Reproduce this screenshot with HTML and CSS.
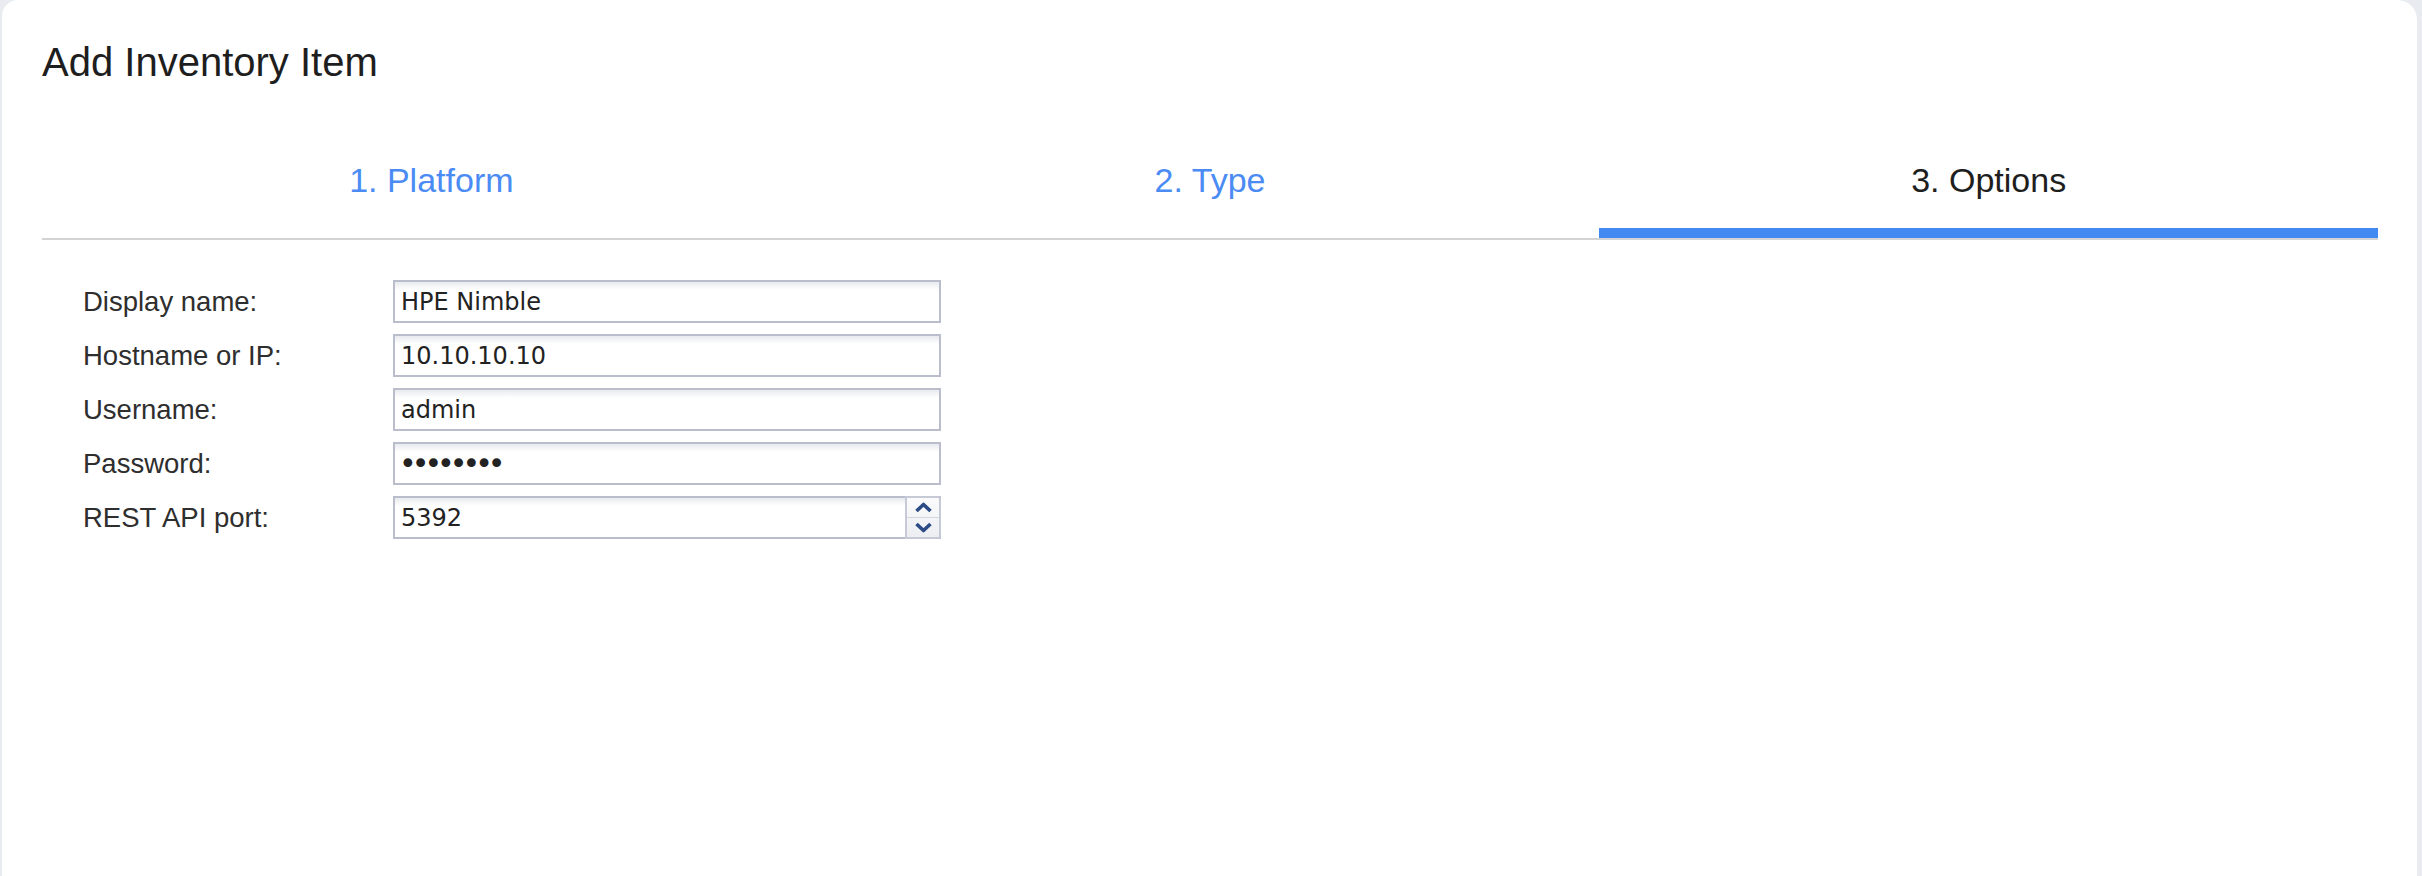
FILE: index.html
```html
<!DOCTYPE html>
<html lang="en">
<head>
    <meta charset="UTF-8">
    <meta name="viewport" content="width=device-width, initial-scale=1.0">
    <title>Add Inventory Item</title>
    <link rel="stylesheet" href="styles.css">
</head>
<body>
    <div class="card">
        <h1 class="title">Add Inventory Item</h1>

        <!-- wizard steps -->
        <div class="tabs">
            <div class="tab done">1. Platform</div>
            <div class="tab done">2. Type</div>
            <div class="tab active">3. Options</div>
        </div>

        <form class="options-form" onsubmit="return false">
            <label class="field-label" for="display-name">Display name:</label>
            <input class="field" type="text" id="display-name" value="HPE Nimble">

            <label class="field-label" for="hostname">Hostname or IP:</label>
            <input class="field" type="text" id="hostname" value="10.10.10.10">

            <label class="field-label" for="username">Username:</label>
            <input class="field" type="text" id="username" value="admin">

            <label class="field-label" for="password">Password:</label>
            <input class="field password" type="password" id="password" value="password">

            <label class="field-label" for="api-port">REST API port:</label>
            <div class="num-field">
                <input class="num-input" type="text" id="api-port" value="5392">
                <div class="spinner">
                    <span class="spin-btn">
                        <svg width="19" height="11" viewBox="0 0 19 11"><polyline points="2.5,9 9.5,2.5 16.5,9" fill="none" stroke="#2c4b86" stroke-width="3.6" stroke-linejoin="round"/></svg>
                    </span>
                    <span class="spin-btn down">
                        <svg width="19" height="11" viewBox="0 0 19 11"><polyline points="2.5,2 9.5,8.5 16.5,2" fill="none" stroke="#2c4b86" stroke-width="3.6" stroke-linejoin="round"/></svg>
                    </span>
                </div>
            </div>
        </form>
    </div>
</body>
</html>
```

FILE: styles.css
```css
body {
    margin: 0;
    background-color: #e8ecf1;
    font-family: "Liberation Sans", Arial, sans-serif;
}
.card {
    margin: 0 5px 0 2px;
    padding: 39px 39px 0 40px;
    min-height: 900px;
    background-color: #fff;
    border-radius: 16px 20px 0 0;
    box-sizing: border-box;
}
.title {
    margin: 0;
    font-size: 40px;
    font-weight: normal;
    line-height: 46px;
    color: #1e1e1e;
}
.tabs {
    display: flex;
    margin-top: 75px;
    border-bottom: 2px solid #d3d3d3;
}
.tab {
    flex: 1;
    padding-bottom: 28px;
    border-bottom: 10px solid transparent;
    font-size: 34px;
    line-height: 40px;
    text-align: center;
    color: #1e1e1e;
}
.tab.done {
    color: #4a8bf4;
}
.tab.active {
    border-bottom-color: #4289f1;
}
.options-form {
    display: grid;
    grid-template-columns: 310px 548px;
    row-gap: 11px;
    align-items: center;
    margin-top: 40px;
    padding-left: 41px;
}
.field-label {
    font-size: 27.5px;
    color: #2e2e2e;
}
.field,
.num-field {
    height: 43px;
    border: 2px solid #b9bdcc;
    background: linear-gradient(to bottom, #e8eaef 0, #fff 8px);
    box-sizing: border-box;
}
.field {
    width: 548px;
    padding: 0 6px;
    font-family: "DejaVu Sans", Verdana, sans-serif;
    font-size: 24px;
    color: #222;
    outline: none;
}
.field.password {
    font-size: 30px;
    letter-spacing: -5px;
    padding-left: 4px;
}
.num-field {
    display: flex;
}
.num-input {
    flex: 1;
    min-width: 0;
    padding: 0 6px;
    border: none;
    background: transparent;
    font-family: "DejaVu Sans", Verdana, sans-serif;
    font-size: 24px;
    color: #222;
    outline: none;
}
.spinner {
    display: flex;
    flex-direction: column;
    width: 32px;
    margin: -2px -2px -2px 0;
    border: 2px solid #c6cad6;
    border-radius: 0 3px 3px 0;
    background: linear-gradient(to bottom, #fbfbfc, #eceef2);
}
.spin-btn {
    flex: 1;
    display: flex;
    align-items: center;
    justify-content: center;
}
.spin-btn.down {
    border-top: 1px solid #d3d6de;
}
```
